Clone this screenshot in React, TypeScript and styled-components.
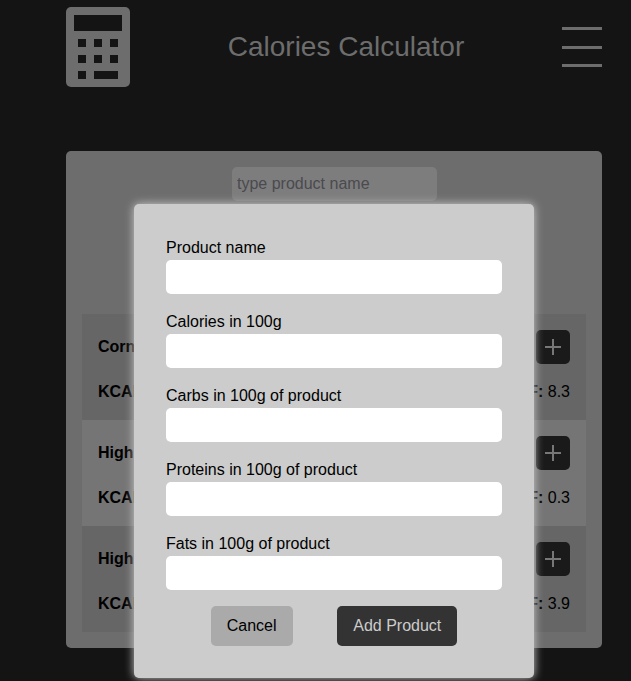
import React from "react";
import styled, { createGlobalStyle } from "styled-components";

const GlobalStyle = createGlobalStyle`
  *, *::before, *::after { box-sizing: border-box; }
  html, body { margin: 0; height: 100%; overflow: hidden; background: #141414; }
  body, input, button { font-family: "Liberation Sans", Arial, sans-serif; font-size: 16px; }
`;

const Page = styled.div`
  position: relative;
  height: 681px;
  padding: 7px 29px 0 66px;
  overflow: hidden;
  background: #141414;
  color: #000;
`;

const Header = styled.header`
  display: flex;
  align-items: center;
  justify-content: space-between;
  height: 80px;
  margin-bottom: 64px;
`;

const Logo = styled.svg`
  display: block;
  width: 64px;
  height: 80px;
`;

const Title = styled.h1`
  margin: 0;
  color: #6d6d6d;
  font-size: 28px;
  font-weight: 400;
  line-height: 34px;
  white-space: nowrap;
`;

const MenuButton = styled.button`
  display: block;
  width: 40px;
  height: 40px;
  padding: 0;
  border: 0;
  background: none;
`;

const Card = styled.main`
  width: 536px;
  height: 497px;
  padding: 16px;
  border-radius: 5px;
  background: #6d6d6d;
`;

const Search = styled.input`
  display: block;
  width: 205px;
  height: 34px;
  margin: 0 auto 113px 150px;
  padding: 0 5px;
  border: 0;
  border-radius: 5px;
  outline: 0;
  background: #7d7d7d;
  &::placeholder { color: #4a4a4f; opacity: 1; }
`;

const ProductList = styled.ul`
  margin: 0;
  padding: 0;
  list-style: none;
`;

const ProductRow = styled.li`
  display: flex;
  flex-direction: column;
  height: 106px;
  padding: 16px;
  background: #666;
  &:nth-child(even) { background: #757575; }
`;

const RowLine = styled.div<{ $height: number }>`
  display: flex;
  align-items: center;
  justify-content: space-between;
  height: ${(p) => p.$height}px;
  & + & { margin-top: 16px; }
`;

const AddButton = styled.button`
  display: grid;
  place-items: center;
  width: 34px;
  height: 34px;
  padding: 0;
  border: 0;
  border-radius: 5px;
  background: #1a1a1a;
`;

const Dialog = styled.form`
  position: absolute;
  top: 204px;
  left: 134px;
  width: 400px;
  height: 474px;
  padding: 32px;
  border-radius: 5px;
  background: #ccc;
  box-shadow: 0 0 10px #ccc;
`;

const Field = styled.label`
  display: block;
  height: 74px;
  line-height: 24px;
`;

const FieldInput = styled.input`
  display: block;
  width: 100%;
  height: 34px;
  padding: 0 5px;
  border: 0;
  border-radius: 5px;
  outline: 0;
  background: #fff;
`;

const Actions = styled.div`
  display: flex;
  justify-content: space-evenly;
`;

const ActionButton = styled.button<{ $primary?: boolean }>`
  height: 40px;
  padding: 0 16px;
  border: 0;
  border-radius: 5px;
  background: ${(p) => (p.$primary ? "#333" : "#aaa")};
  color: ${(p) => (p.$primary ? "#ccc" : "#000")};
`;

const products = [
  { name: "Corn", fat: "8.3" },
  { name: "High", fat: "0.3" },
  { name: "High", fat: "3.9" },
];

const fields = [
  "Product name",
  "Calories in 100g",
  "Carbs in 100g of product",
  "Proteins in 100g of product",
  "Fats in 100g of product",
];

export default function App() {
  return (
    <>
      <GlobalStyle />
      <Page>
        <Header>
          <Logo viewBox="0 0 64 80" aria-hidden="true">
            <rect width="64" height="80" rx="5" fill="#6d6d6d" />
            <path
              fill="#141414"
              d="M8 8h48v16H8zM12 32h8v8h-8zM28 32h8v8h-8zM44 32h8v8h-8zM12 48h8v8h-8zM28 48h8v8h-8zM44 48h8v8h-8zM12 64h8v8h-8zM28 64h24v8H28z"
            />
          </Logo>
          <Title>Calories Calculator</Title>
          <MenuButton aria-label="Menu">
            <svg width="40" height="40" viewBox="0 0 40 40" display="block">
              <path fill="#6d6d6d" d="M0 0h40v3H0zM0 19h40v3H0zM0 37h40v3H0z" />
            </svg>
          </MenuButton>
        </Header>
        <Card>
          <Search placeholder="type product name" />
          <ProductList>
            {products.map((p) => (
              <ProductRow key={p.fat}>
                <RowLine $height={34}>
                  <b>{p.name}</b>
                  <AddButton type="button" aria-label="Add">
                    <svg width="16" height="16" viewBox="0 0 16 16">
                      <path d="M8 0v16M0 8h16" stroke="#777" strokeWidth="2" />
                    </svg>
                  </AddButton>
                </RowLine>
                <RowLine $height={24}>
                  <b>KCAL:</b>
                  <span><b>F:</b> {p.fat}</span>
                </RowLine>
              </ProductRow>
            ))}
          </ProductList>
        </Card>
        <Dialog>
          {fields.map((f) => (
            <Field key={f}>
              {f}
              <FieldInput />
            </Field>
          ))}
          <Actions>
            <ActionButton type="button">Cancel</ActionButton>
            <ActionButton type="button" $primary>Add Product</ActionButton>
          </Actions>
        </Dialog>
      </Page>
    </>
  );
}
